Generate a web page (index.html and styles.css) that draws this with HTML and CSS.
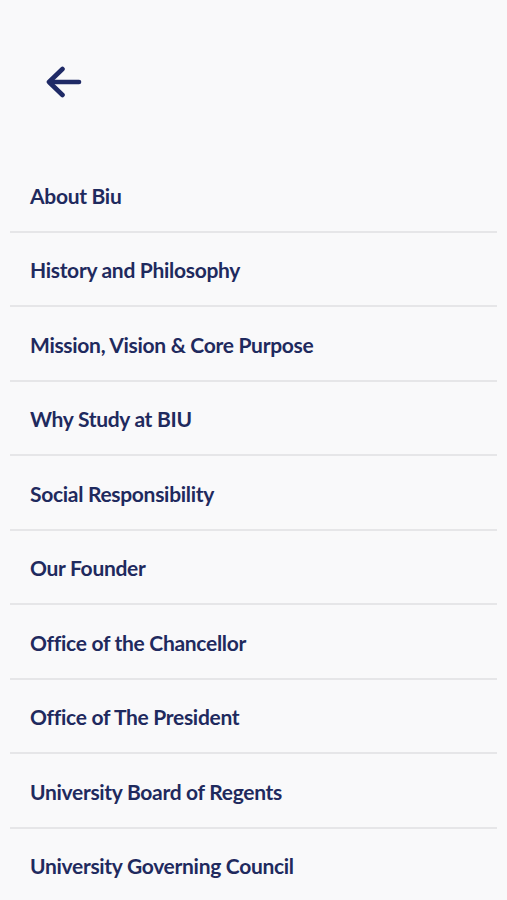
FILE: index.html
```html
<!DOCTYPE html>
<html>
<head>
    <title>About</title>
    <link rel="stylesheet" href="styles.css">
</head>
<body>
    <div class="statusbar"></div>

    <header class="topbar">
        <button class="back" aria-label="Back">
            <svg width="36" height="34" viewBox="0 0 36 34" fill="none" stroke="#1f2a66" stroke-width="4.6" stroke-linecap="round" stroke-linejoin="round">
                <path d="M33 17H4"/>
                <path d="M16.5 4L3 17L16.5 30"/>
            </svg>
        </button>
    </header>

    <ul class="menu">
        <li>About Biu</li>
        <li>History and Philosophy</li>
        <li>Mission, Vision &amp; Core Purpose</li>
        <li>Why Study at BIU</li>
        <li>Social Responsibility</li>
        <li>Our Founder</li>
        <li>Office of the Chancellor</li>
        <li>Office of The President</li>
        <li>University Board of Regents</li>
        <li>University Governing Council</li>
    </ul>
</body>
</html>
```

FILE: styles.css
```css
body {
    margin: 0;
    background-color: #f9f9fa;
    font-family: Lato, "Open Sans", sans-serif;
    overflow: hidden;
}

.statusbar {
    height: 30px;
}

.topbar {
    height: 128px;
    padding-left: 46px;
    box-sizing: border-box;
    padding-top: 35px;
}

.back {
    background: none;
    border: none;
    padding: 0;
    cursor: pointer; /* tap target */
}

.menu {
    list-style: none;
    margin: 0 10px;
    padding: 0;
}

.menu li {
    height: 74.5px;
    box-sizing: border-box;
    border-bottom: 2px solid #e6e6e8;
    display: flex;
    align-items: center;
    padding-left: 20px;
    padding-top: 2px;
    font-size: 21px;
    font-weight: 700;
    color: #1f2a5e;
    letter-spacing: -0.3px;
}
```
